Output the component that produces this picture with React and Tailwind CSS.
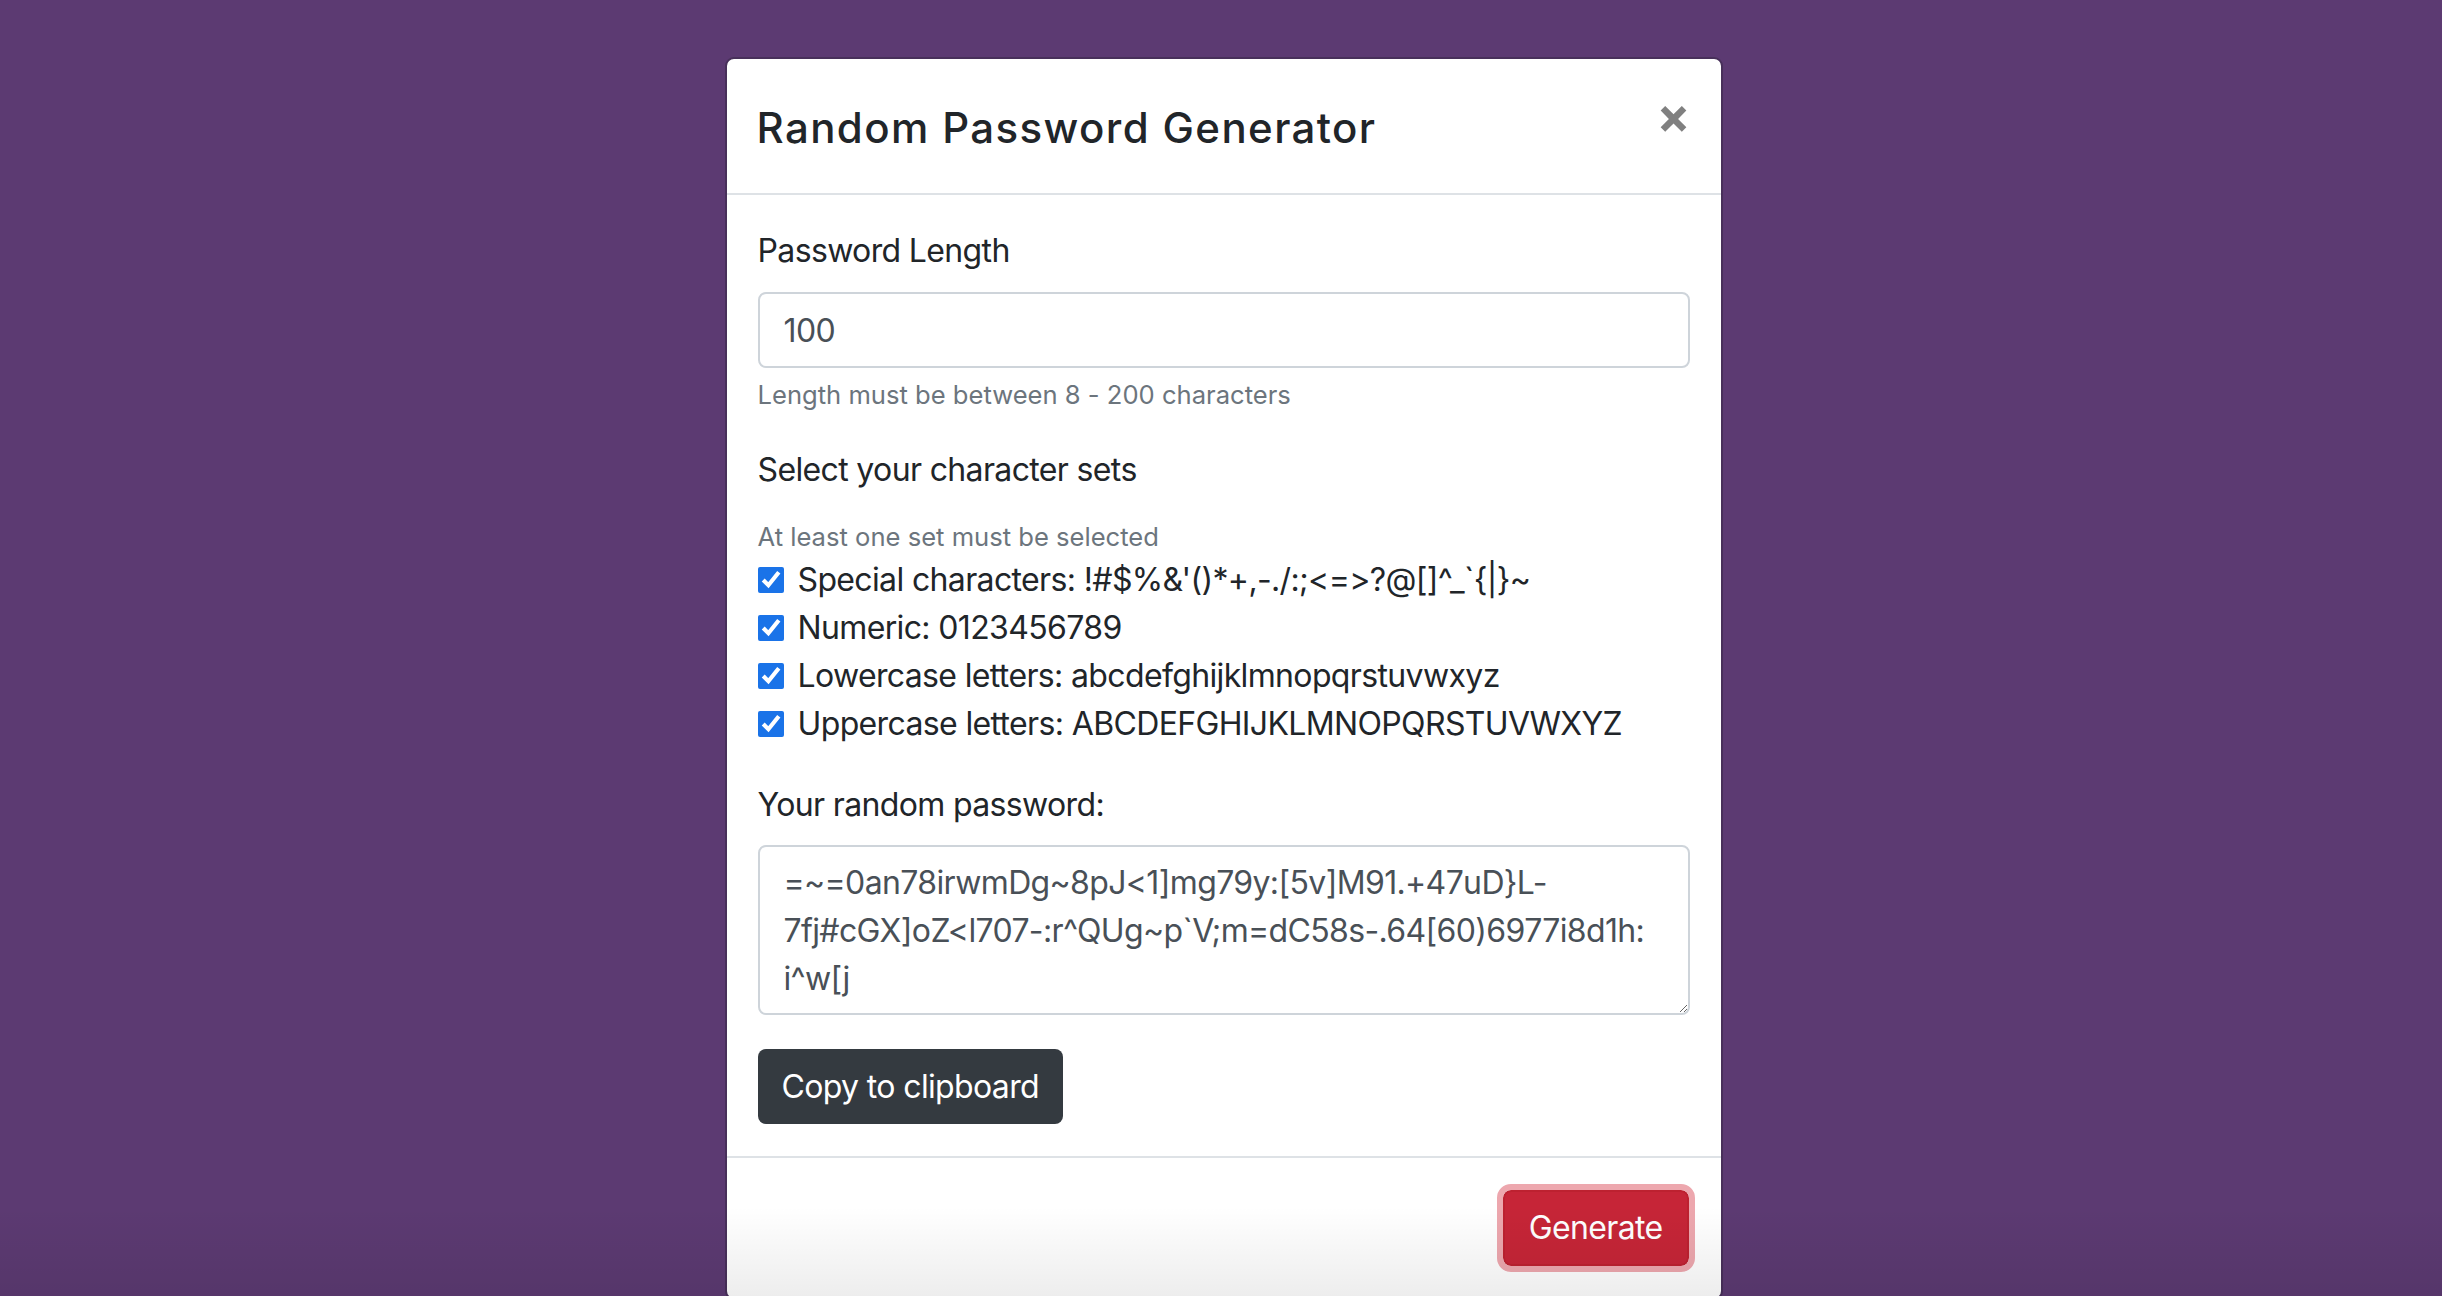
import React, { useState } from 'react';

const SETS = [
    { key: 'special', label: 'Special characters', chars: "!#$%&'()*+,-./:;<=>?@[]^_`{|}~" },
    { key: 'numeric', label: 'Numeric', chars: '0123456789' },
    { key: 'lower', label: 'Lowercase letters', chars: 'abcdefghijklmnopqrstuvwxyz' },
    { key: 'upper', label: 'Uppercase letters', chars: 'ABCDEFGHIJKLMNOPQRSTUVWXYZ' }
];

const INITIAL = '=~=0an78irwmDg~8pJ<1]mg79y:[5v]M91.+47uD}L-\n7fj#cGX]oZ<l707-:r^QUg~p`V;m=dC58s-.64[60)6977i8d1h:\ni^w[j';

const App = () => {
    const [length, setLength] = useState('100');
    const [checked, setChecked] = useState({ special: true, numeric: true, lower: true, upper: true });
    const [password, setPassword] = useState(INITIAL);

    const toggle = key => setChecked({ ...checked, [key]: !checked[key] });

    const generate = () => {
        const pool = SETS.filter(s => checked[s.key]).map(s => s.chars).join('');
        const n = Math.min(200, Math.max(8, parseInt(length, 10) || 8));
        if (!pool) return;
        let out = '';
        for (let i = 0; i < n; i++) out += pool[Math.floor(Math.random() * pool.length)];
        setPassword(out);
    };

    const copy = () => {
        if (navigator.clipboard) navigator.clipboard.writeText(password.replace(/\n/g, ''));
    };

    return (
        <div className="relative h-screen overflow-hidden bg-[#5c3a72] font-['Inter','Noto_Sans',sans-serif] [font-feature-settings:'calt'_0,'liga'_0] text-[#212529]">
            <div className="flex justify-center pt-[57px] pl-[5px]">
                <div className="w-[998px] bg-white border-2 border-[#48305a] rounded-[9px] overflow-hidden">
                    <div className="flex justify-between items-start pl-[30px] pr-[30px] pt-[34px] pb-[30px] border-b-2 border-[#dee2e6]">
                        <h5 className="text-[42px] leading-[70px] font-medium tracking-[0.033em]">Random Password Generator</h5>
                        <button className="text-[50px] leading-[48px] font-bold text-[#808080] mt-[-2px]">×</button>
                    </div>

                    <div className="px-[31px] pt-[32px] pb-[32px] text-[32px] tracking-[-0.02em]">
                        <label className="block leading-[48px] mb-[17px]">Password Length</label>
                        <input
                            type="number"
                            value={length}
                            onChange={e => setLength(e.target.value)}
                            className="block w-full h-[76px] px-[24px] border-2 border-[#ced4da] rounded-[8px] text-[32px] text-[#495057] outline-none"
                        />
                        <p className="mt-[8px] text-[25.6px] leading-[38px] tracking-normal text-[#6c757d]">Length must be between 8 - 200 characters</p>

                        <label className="block leading-[48px] mt-[32px]">Select your character sets</label>
                        <p className="mt-[24px] text-[25.6px] leading-[38px] tracking-normal text-[#6c757d]">At least one set must be selected</p>
                        <div className="flex flex-col">
                            {SETS.map(s => (
                                <label key={s.key} className="flex items-center gap-[14px] leading-[48px]">
                                    <input
                                        type="checkbox"
                                        checked={checked[s.key]}
                                        onChange={() => toggle(s.key)}
                                        className="w-[26px] h-[26px] m-0 accent-[#1a73e8]"
                                    />
                                    <span>{s.label}: {s.chars}</span>
                                </label>
                            ))}
                        </div>

                        <label className="block leading-[48px] mt-[33px] mb-[16px]">Your random password:</label>
                        <textarea
                            readOnly
                            value={password}
                            className="block w-full h-[170px] px-[24px] py-[12px] border-2 border-[#ced4da] rounded-[8px] text-[32px] leading-[48px] tracking-[-0.02em] text-[#495057] outline-none"
                        />

                        <button onClick={copy} className="mt-[34px] h-[75px] px-[24px] rounded-[8px] bg-[#343a40] text-white text-[32px]">
                            Copy to clipboard
                        </button>
                    </div>

                    <div className="flex justify-end border-t-2 border-[#dee2e6] px-[24px] pt-[24px] pb-[24px]">
                        <button
                            onClick={generate}
                            className="m-[8px] h-[76px] px-[24px] rounded-[8px] bg-[#c62537] border-2 border-[#bd2130] text-white text-[32px] tracking-[-0.02em] outline-[6px] outline-solid outline-[#eda7ae]"
                        >
                            Generate
                        </button>
                    </div>
                </div>
            </div>
            <div className="pointer-events-none absolute bottom-0 left-0 right-0 h-[90px] bg-gradient-to-b from-transparent to-black/[0.07]"></div>
        </div>
    );
};

export default App;
